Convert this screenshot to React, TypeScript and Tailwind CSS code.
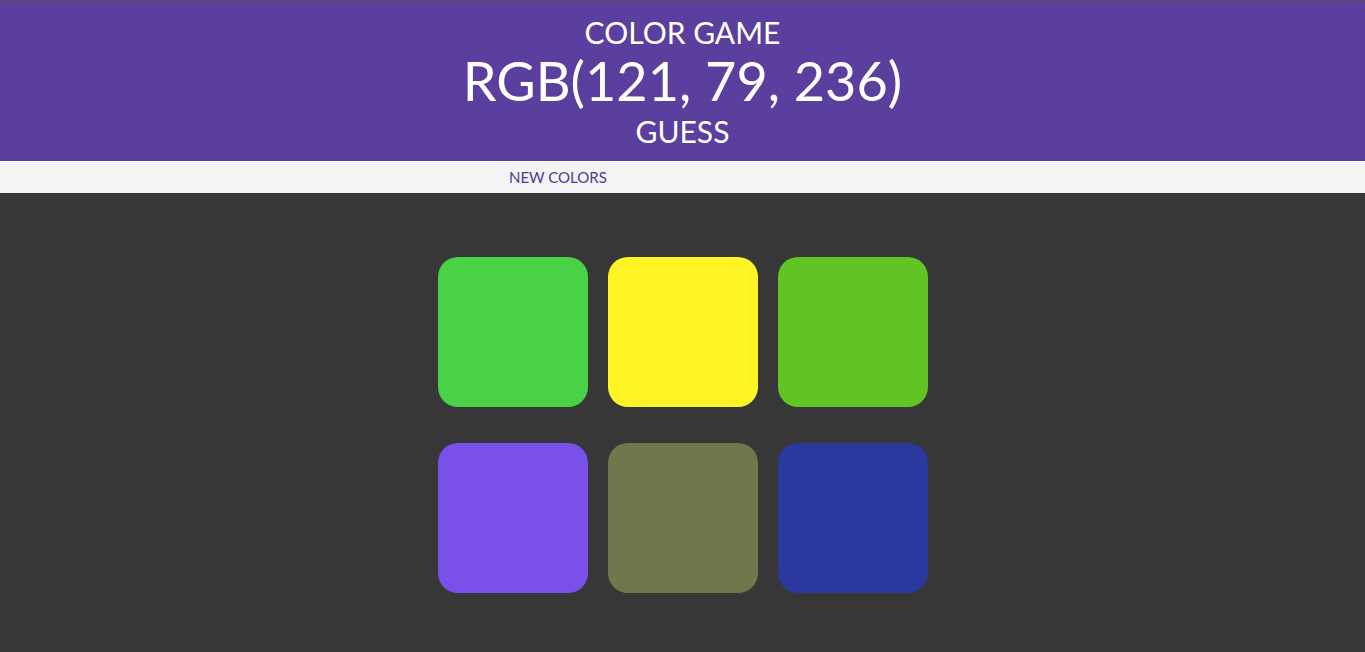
const squares = ["#4ad246", "#fff426", "#60c425", "#7950e9", "#6f784b", "#2b389e"];

export default function App() {
  return (
    <div className="min-h-screen w-full bg-[#373737] font-['Lato',sans-serif]">
      <header className="border-t border-[#555555] bg-[#5a3f9f] text-white text-center uppercase pt-[10px] h-[161px]">
        <h1 className="text-[30px] leading-[42px] font-normal">Color Game</h1>
        <h2 className="text-[54px] leading-[56px] font-normal">RGB(121, 79, 236)</h2>
        <h3 className="text-[30px] leading-[44px] font-normal">Guess</h3>
      </header>
      <div className="h-[32px] bg-[#f4f4f4] flex items-center pl-[509px]">
        <button className="text-[15px] text-[#4e3a9c] uppercase">New Colors</button>
      </div>
      <div className="mx-auto w-[490px] pt-[64px] grid grid-cols-3 gap-x-[20px] gap-y-[36px]">
        {squares.map((c) => (
          <div key={c} className="w-[150px] h-[150px] rounded-[20px]" style={{ backgroundColor: c }} />
        ))}
      </div>
    </div>
  );
}
